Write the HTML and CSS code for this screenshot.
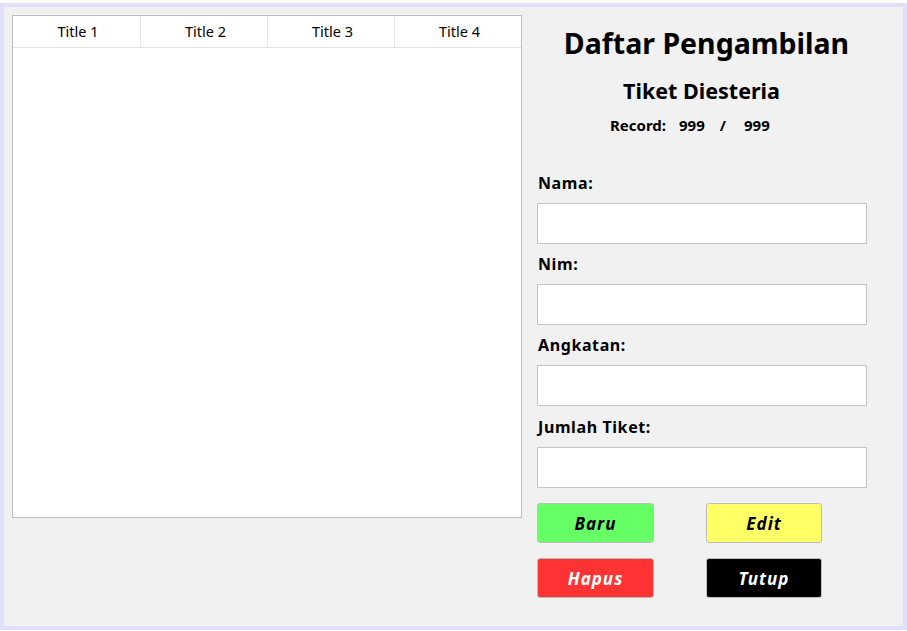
FILE: index.html
```html
<!DOCTYPE html>
<html>
<head>
<meta charset="utf-8">
<link rel="stylesheet" href="styles.css">
</head>
<body>
<div class="frame">
  <div class="grid">
    <div class="grid-head">
      <div class="cell">Title 1</div>
      <div class="cell">Title 2</div>
      <div class="cell">Title 3</div>
      <div class="cell">Title 4</div>
    </div>
  </div>
  <div class="form">
    <h1 class="title">Daftar Pengambilan</h1>
    <h2 class="subtitle">Tiket Diesteria</h2>
    <div class="record">
      <span class="rec-label">Record:</span>
      <span class="rec-num">999</span>
      <span class="rec-sep">/</span>
      <span class="rec-num">999</span>
    </div>
    <label class="label first">Nama:</label>
    <div class="input"></div>
    <label class="label">Nim:</label>
    <div class="input"></div>
    <label class="label">Angkatan:</label>
    <div class="input"></div>
    <label class="label last">Jumlah Tiket:</label>
    <div class="input"></div>
    <div class="buttons">
      <button class="btn green">Baru</button>
      <button class="btn yellow">Edit</button>
      <button class="btn red">Hapus</button>
      <button class="btn black">Tutup</button>
    </div>
  </div>
</div>
</body>
</html>
```
FILE: styles.css
```css
html, body {
  margin: 0;
  padding: 0;
  background: #ffffff;
}
body {
  font-family: "Noto Sans", "Open Sans", sans-serif;
  color: #000;
}
.frame {
  box-sizing: border-box;
  margin-top: 3px;
  width: 907px;
  height: 627px;
  border: 4px solid #e0e0fc;
  background: #f1f1f1;
  display: flex;
  align-items: flex-start;
  padding: 8px 0 0 8px;
}
.grid {
  box-sizing: border-box;
  width: 510px;
  height: 503px;
  border: 1px solid #bdbdbd;
  background: #fff;
  flex: none;
}
.grid-head {
  display: grid;
  grid-template-columns: 128px 127px 127px 1fr;
  height: 32px;
  border-bottom: 1px solid #e3e3e3;
  box-sizing: border-box;
}
.cell {
  font-size: 14.5px;
  display: flex;
  align-items: center;
  justify-content: center;
  border-right: 1px solid #e6e6e6;
  padding-bottom: 1px;
  padding-left: 3px;
}
.cell:last-child { border-right: none; }
.form {
  margin-left: 15px;
  width: 330px;
  display: flex;
  flex-direction: column;
}
.title {
  margin: 8px 0 0 0;
  font-size: 28.5px;
  font-weight: 700;
  line-height: 40px;
  text-align: center;
  width: 339px;
}
.subtitle {
  margin: 13px 0 0 0;
  font-size: 21.5px;
  font-weight: 700;
  line-height: 30px;
  text-align: center;
  width: 329px;
}
.record {
  margin-top: 9px;
  display: flex;
  justify-content: flex-start;
  padding-left: 73px;
  font-size: 15px;
  font-weight: 700;
  line-height: 20px;
}
.rec-num { margin-left: 13px; }
.rec-sep { margin-left: 15px; }
.rec-sep + .rec-num { margin-left: 18px; }
.label {
  font-size: 16px;
  font-weight: 700;
  letter-spacing: 0.6px;
  line-height: 20px;
  margin: 10px 0 0 1px;
}
.label.first { margin-top: 38px; }
.label.last { margin-top: 11px; }
.input {
  box-sizing: border-box;
  height: 41px;
  margin-top: 10px;
  border: 1px solid #c4c4c4;
  background: #fff;
}
.buttons {
  margin-top: 15px;
  display: grid;
  grid-template-columns: 117px 116px;
  column-gap: 52px;
  row-gap: 15px;
}
.btn {
  box-sizing: border-box;
  height: 40px;
  border: 1px solid #bdbdbd;
  border-radius: 3px;
  font-family: "Noto Sans", "Open Sans", sans-serif;
  font-size: 17px;
  font-weight: 700;
  font-style: italic;
  letter-spacing: 1px;
  padding: 0;
}
.green { background: #66ff66; color: #000; }
.yellow { background: #ffff66; color: #000; }
.red { background: #ff3333; color: #fff; }
.black { background: #000; color: #fff; }
```
